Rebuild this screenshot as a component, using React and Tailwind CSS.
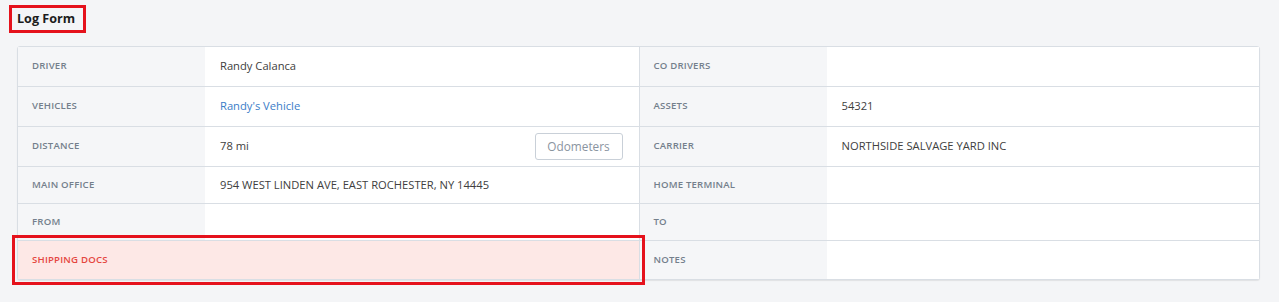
import React from "react";

const rows = [
  { h: "h-[40px]", l: ["DRIVER", "Randy Calanca"], r: ["CO DRIVERS", ""] },
  { h: "h-[40px]", l: ["VEHICLES", "Randy's Vehicle", "link"], r: ["ASSETS", "54321"] },
  { h: "h-[40px]", l: ["DISTANCE", "78 mi", "odo"], r: ["CARRIER", "NORTHSIDE SALVAGE YARD INC"] },
  { h: "h-[37px]", l: ["MAIN OFFICE", "954 WEST LINDEN AVE, EAST ROCHESTER, NY 14445"], r: ["HOME TERMINAL", ""] },
  { h: "h-[37px]", l: ["FROM", ""], r: ["TO", ""] },
  { h: "h-[38px]", l: ["SHIPPING DOCS", "", "error"], r: ["NOTES", ""] },
];

function Half({ data, left }) {
  const [label, value, kind] = data;
  const err = kind === "error";
  return (
    <div
      className={`flex h-full ${left ? "" : "border-l border-[#d9dee4]"} ${
        err ? "bg-[#fde8e6] outline-[3px] outline-solid outline-[#e5121c] outline-offset-[3px] relative z-10" : ""
      }`}
    >
      <div
        className={`w-[187px] shrink-0 flex items-center pl-[14px] text-[9.6px] font-semibold tracking-[0.2px] ${
          err ? "text-[#e5463f]" : "bg-[#f5f6f8] text-[#747f8c]"
        }`}
      >
        {label}
      </div>
      <div className={`flex-1 flex items-center pl-[15px] pr-[16px] text-[11.2px] ${err ? "" : "bg-white"}`}>
        {kind === "link" ? (
          <span className="text-[#3b7dc8]">{value}</span>
        ) : (
          <span className="text-[#404040]">{value}</span>
        )}
        {kind === "odo" && (
          <button className="ml-auto w-[88px] h-[27px] border border-[#c9d0d8] rounded-[3px] bg-white text-[11.8px] text-[#8a949f]">
            Odometers
          </button>
        )}
      </div>
    </div>
  );
}

export default function App() {
  return (
    <div
      className="w-[1279px] h-[302px] bg-[#f4f5f7] overflow-hidden"
      style={{ fontFamily: '"Open Sans", "Liberation Sans", sans-serif' }}
    >
      <div className="pt-[5px] pl-[9px]">
        <div className="flex items-center w-[77px] h-[28px] pl-[5px] border-[3px] border-[#e5121c] text-[12.6px] font-bold text-[#1c1c1c]">
          Log Form
        </div>
      </div>
      <div className="ml-[17px] mr-[19px] mt-[13px] border border-[#d9dee4] rounded-[3px] shadow-[0_1px_1px_rgba(0,0,0,0.08)] bg-white">
        {rows.map((row, i) => (
          <div
            key={i}
            className={`grid grid-cols-2 ${row.h} ${i < rows.length - 1 ? "border-b border-[#d9dee4]" : ""}`}
          >
            <Half data={row.l} left />
            <Half data={row.r} />
          </div>
        ))}
      </div>
    </div>
  );
}
